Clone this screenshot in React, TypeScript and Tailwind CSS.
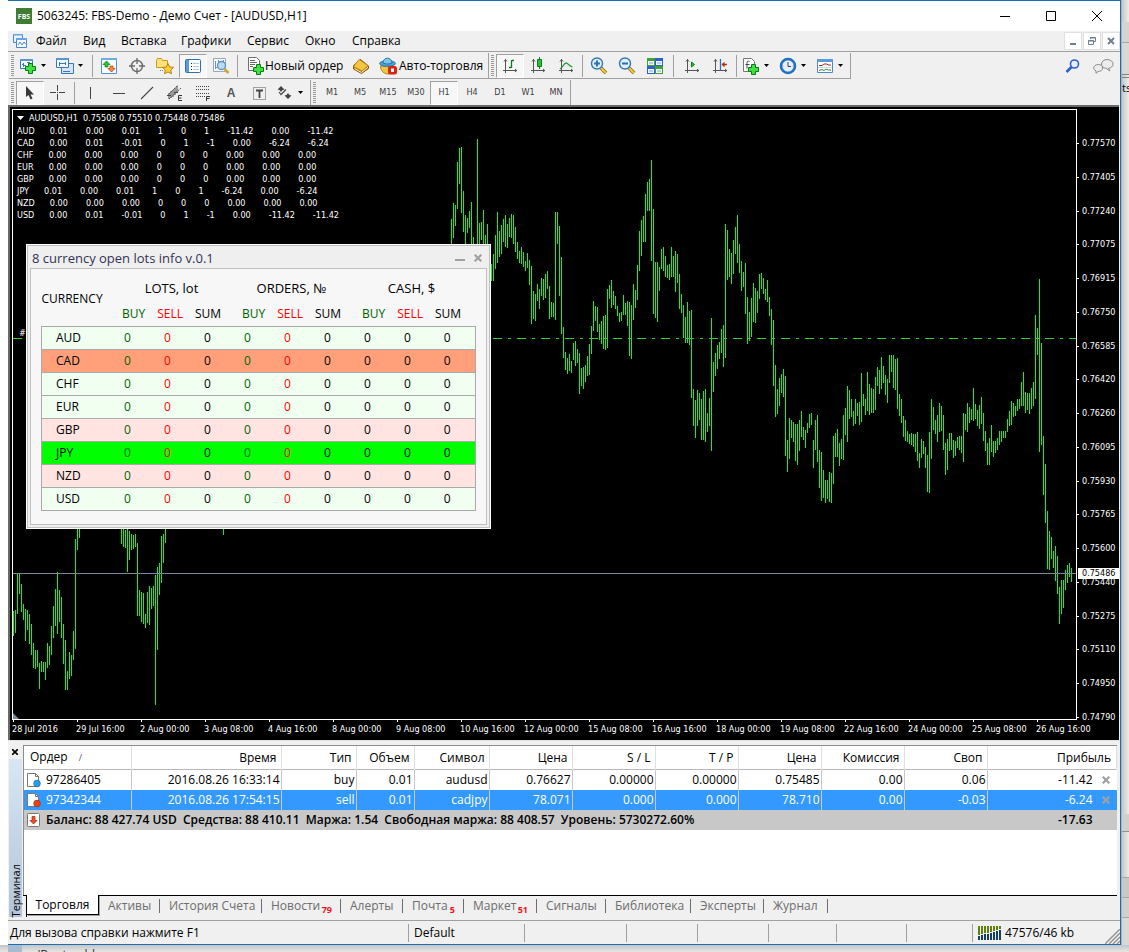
import clsx from "clsx";

type Children = React.PropsWithChildren<{ className?: string }>;

// ---------- chart data: "high-low" of each hourly bar, in plot pixels ----------

const barRuns = [
  {
    start: 0,
    bars: "501-526 500-523 463-504 464-484 474-502 494-510 499-531 500-520 504-534 514-545 533-558 540-559 540-557 553-579 551-562 552-562 552-570 533-558 536-555 516-545 496-528 479-516 462-524 480-512 487-528 514-554 530-580 561-580 542-569 545-566 521-550 429-539 410-440 410-428",
  },
  {
    start: 54,
    bars: "410-434 410-437 420-438 410-462 421-450 424-440 425-439 424-437 433-506 480-506 482-512 483-514 504-518 482-513 476-515 478-499 476-496 465-595 457-540 453-485 426-473 424-453 410-433",
  },
  { start: 105, bars: "410-425" },
  {
    start: 219,
    bars: "109-135 93-128 95-116 52-99 38-74 37-103 81-122 105-135 108-123 101-118 92-135 127-135 134-136 29-135 113-135 112-130 100-135 125-135 114-135 134-140 154-171 144-171 125-159 102-153 121-147 115-144 109-132 105-137 114-138 108-127 104-128 105-134 117-142 132-149 141-153 137-154 142-157 151-161 143-158 150-175 156-214 181-209 184-211 174-191 179-199 168-186 169-190 164-188 161-179 176-209 192-207 193-207 102-210 102-134 116-186 147-224 217-248 242-260 248-264 244-261 251-263 233-250 231-256 239-253 243-284 258-276 257-279 255-272 246-266 234-265 216-244 191-221 196-211 197-222 214-230 211-234 206-239 205-240 179-238 175-189 170-198 181-195 186-199 196-206 203-212 202-211 185-205 193-205 191-216 192-246 195-249 174-210 180-198 155-190 121-161 110-146 106-132 84-132 72-101 69-101 50-151 99-204 152-208 152-212 157-181 139-159 137-161 146-167 155-168 154-170 137-167 146-167 141-182 144-173 164-199 184-203 195-228 207-233 192-233 201-235 200-288 279-316 290-328 280-316 283-310 289-330 281-330 279-332 303-322 288-316 208-341 252-282 243-266 235-259 232-249 219-243 215-257 114-248 120-170 139-167 143-174 130-164 117-144 105-153 134-163",
  },
  {
    start: 364,
    bars: "151-181 162-177 153-204 187-234 202-231 188-227 173-212 178-213 181-203 164-189 163-179 168-184 179-190 170-192 187-206 199-235 210-276 255-307 279-304 268-296 264-283 259-287 266-346 330-362 308-349 310-328 312-332 314-351 314-355 310-341 301-327 317-330 320-338 313-323 304-318 303-315 330-358 310-340 305-352 340-378 342-391 360-388 370-393 370-389 362-392 363-393 326-374 323-347 319-347 333-356 329-349 305-350 298-325 276-332 280-309 289-307 301-316 289-314 293-306 292-315 263-312 284-296 289-305 262-301 274-305 278-303 279-303 267-300 257-276 260-284 247-279 256-273 265-285 269-293 245-273 245-262 245-278 249-280 248-299 284-306 289-313 306-327 310-331 321-332 324-334 323-335 324-337 324-342 322-351 343-358 329-348 331-344 337-358 345-382 322-383 289-349 297-320 310-324 305-332 293-322 296-321 305-340 333-365 329-360 323-341 323-340 330-348 331-346 327-338 326-340 326-343 303-352 304-320 293-322 297-313 299-310 278-311 294-309 300-316 295-319 287-314 303-331 321-341 333-355 328-355 315-342 331-347 331-343 328-340 321-335 321-332 321-328 321-328 309-322 301-316 291-315 293-307 296-306 289-301 289-299 272-296 262-296 282-303 283-300 283-304 278-299 272-296 205-289 218-245 169-342 233-335 326-385 354-413 401-459 421-460 427-449 441-458 436-471 446-484 477-514 470-504 470-498 460-480 455-473 453-467 458-472",
  },
];

const barPath = barRuns
  .flatMap(({ start, bars }) =>
    bars.split(" ").map((bar, i) => {
      const [high, low] = bar.split("-");
      return `M${(start + i) * 2 + 0.5} ${high}V${low}`;
    })
  )
  .join("");

const priceLabels = [
  "0.77570", "0.77405", "0.77240", "0.77075", "0.76915", "0.76750", "0.76585", "0.76420", "0.76260",
  "0.76095", "0.75930", "0.75765", "0.75600", "0.75440", "0.75275", "0.75110", "0.74950", "0.74790",
];

const dateLabels = [
  "28 Jul 2016", "29 Jul 16:00", "2 Aug 00:00", "3 Aug 08:00", "4 Aug 16:00", "8 Aug 00:00",
  "9 Aug 08:00", "10 Aug 16:00", "12 Aug 00:00", "15 Aug 08:00", "16 Aug 16:00", "18 Aug 00:00",
  "19 Aug 08:00", "22 Aug 16:00", "24 Aug 00:00", "25 Aug 08:00", "26 Aug 16:00",
];

const comments = [
  ["AUD", "0.01", "0.00", "0.01", "1", "0", "1", "-11.42", "0.00", "-11.42"],
  ["CAD", "0.00", "0.01", "-0.01", "0", "1", "-1", "0.00", "-6.24", "-6.24"],
  ["CHF", "0.00", "0.00", "0.00", "0", "0", "0", "0.00", "0.00", "0.00"],
  ["EUR", "0.00", "0.00", "0.00", "0", "0", "0", "0.00", "0.00", "0.00"],
  ["GBP", "0.00", "0.00", "0.00", "0", "0", "0", "0.00", "0.00", "0.00"],
  ["JPY", "0.01", "0.00", "0.01", "1", "0", "1", "-6.24", "0.00", "-6.24"],
  ["NZD", "0.00", "0.00", "0.00", "0", "0", "0", "0.00", "0.00", "0.00"],
  ["USD", "0.00", "0.01", "-0.01", "0", "1", "-1", "0.00", "-11.42", "-11.42"],
];

const lots = [
  { name: "AUD", bg: "bg-[#f0fff0]" },
  { name: "CAD", bg: "bg-[#ffa07a]" },
  { name: "CHF", bg: "bg-[#f0fff0]" },
  { name: "EUR", bg: "bg-[#f0fff0]" },
  { name: "GBP", bg: "bg-[#ffe4e1]" },
  { name: "JPY", bg: "bg-[#00ff00]" },
  { name: "NZD", bg: "bg-[#ffe4e1]" },
  { name: "USD", bg: "bg-[#f0fff0]" },
];

const lotColors = [
  "text-[#006400]", "text-[#ff0000]", "text-black",
  "text-[#006400]", "text-[#ff0000]", "text-black",
  "text-black", "text-black", "text-black",
];

const orders = [
  {
    selected: false,
    cells: ["2016.08.26 16:33:14", "buy", "0.01", "audusd", "0.76627", "0.00000", "0.00000", "0.75485", "0.00", "0.06"],
    id: "97286405",
    profit: "-11.42",
  },
  {
    selected: true,
    cells: ["2016.08.26 17:54:15", "sell", "0.01", "cadjpy", "78.071", "0.000", "0.000", "78.710", "0.00", "-0.03"],
    id: "97342344",
    profit: "-6.24",
  },
];

const orderHeads = ["Время", "Тип", "Объем", "Символ", "Цена", "S / L", "T / P", "Цена", "Комиссия", "Своп"];

const terminalTabs = [
  { label: "Активы", w: "w-[61px]" },
  { label: "История Счета", w: "w-[102px]" },
  { label: "Новости", count: 79, w: "w-[79px]" },
  { label: "Алерты", w: "w-[62px]" },
  { label: "Почта", count: 5, w: "w-[61px]" },
  { label: "Маркет", count: 51, w: "w-[73px]" },
  { label: "Сигналы", w: "w-[69px]" },
  { label: "Библиотека", w: "w-[85px]" },
  { label: "Эксперты", w: "w-[73px]" },
  { label: "Журнал", w: "w-[64px]" },
];

const menu = [
  { label: "Файл", w: "w-[47px]" },
  { label: "Вид", w: "w-[38px]" },
  { label: "Вставка", w: "w-[60px]" },
  { label: "Графики", w: "w-[66px]" },
  { label: "Сервис", w: "w-[58px]" },
  { label: "Окно", w: "w-[47px]" },
  { label: "Справка", w: "w-[60px]" },
];

const timeframes = ["M1", "M5", "M15", "M30", "H1", "H4", "D1", "W1", "MN"];

// ---------- icons ----------

function Icon({ children, size = 18 }: React.PropsWithChildren<{ size?: number }>) {
  return (
    <svg width={size} height={size} viewBox={`0 0 ${size} ${size}`} fill="none" className="shrink-0" aria-hidden>
      {children}
    </svg>
  );
}

function Plus({ x, y }: { x: number; y: number }) {
  return (
    <path
      transform={`translate(${x} ${y})`}
      d="M3.5 .5h4v3h3v4h-3v3h-4v-3h-3v-4h3z"
      fill="#3fe03f"
      stroke="#0b7a16"
    />
  );
}

const NewChartIcon = () => (
  <Icon>
    <path d="M1.500 2.500h12v9h-12z" fill="#f2f8ff" stroke="#3c78b8" />
    <path d="M1 2h13v2H1z" fill="#5a96d2" />
    <path d="M4.500 6v4M3 7.500h1M5 8.500h2M8 5.500h3" stroke="#3c78b8" />
    <Plus x={6} y={6} />
  </Icon>
);

const ProfilesIcon = () => (
  <Icon>
    <path d="M5.500 6.500h12v10h-12z" fill="#d5e6f8" stroke="#3c78b8" />
    <path d="M.500 1.500h12v9h-12z" fill="#f2f8ff" stroke="#3c78b8" />
    <path d="M0 1h13v2H0z" fill="#5a96d2" />
    <path d="M3.500 5v4M4 6.500h5M9.500 5v3M7 14.500h7" stroke="#3c78b8" />
  </Icon>
);

const MarketWatchIcon = () => (
  <Icon>
    <path d="M1.500 1.500h15v15h-15z" fill="#fafcff" stroke="#4f94d8" />
    <path d="M1 1h16v2H1z" fill="#6aaee8" />
    <path d="M6.500 4l3.500 3.500H8V10H5V7.500H3z" fill="#2fc03a" stroke="#0b7a16" strokeWidth=".7" />
    <path d="M11.500 15L8 11.500h2V9h3v2.500h2z" fill="#ff8a3a" stroke="#b83a10" strokeWidth=".7" />
  </Icon>
);

const TargetIcon = () => (
  <Icon>
    <circle cx="9" cy="9" r="5.500" stroke="#6a6a6a" strokeWidth="1.400" />
    <path d="M9 1v6M9 11v6M1 9h6M11 9h6" stroke="#6a6a6a" strokeWidth="1.300" />
  </Icon>
);

const FavoritesIcon = () => (
  <Icon>
    <path d="M.500 3.500v7h11v-7h-5l-1-2h-4z" fill="#ffe27a" stroke="#c99a1c" />
    <path d="M4 13.500h4" stroke="#777" strokeDasharray="1 1" />
    <path d="M12 6.500l1.700 3.500 3.800.400-2.800 2.600.8 3.800-3.500-1.900-3.500 1.900.8-3.800-2.800-2.600 3.800-.4z" fill="#ffcf3a" stroke="#b98212" />
  </Icon>
);

const NavigatorIcon = () => (
  <Icon>
    <rect x="1.500" y="2.500" width="15" height="13" rx="1" fill="#fff" stroke="#2f6fb4" />
    <path d="M2 3h3v12H2z" fill="#5a9be0" />
    <path d="M7 6.500h1M7 9.500h1M7 12.500h1" stroke="#222" />
    <path d="M9 6.500h6M9 9.500h6M9 12.500h6" stroke="#a9cbee" />
  </Icon>
);

const TesterIcon = () => (
  <Icon>
    <path d="M1.500 1.500h12v13h-12z" fill="#f5f9ff" stroke="#9aa9ba" />
    <path d="M3.500 4v8M6.500 3v5M11.500 3v3M4 10.500h2" stroke="#8090a4" />
    <circle cx="9.500" cy="8.500" r="4" fill="#b8dcf8" stroke="#5d8fc0" strokeWidth="1.300" />
    <path d="M12.500 12l4 4" stroke="#d9a52a" strokeWidth="2.600" />
  </Icon>
);

const NewOrderIcon = () => (
  <Icon>
    <path d="M1.500 .500h8l3 3v10h-11z" fill="#fff" stroke="#6f6f6f" />
    <path d="M3 3.500h5M3 5.500h7M3 7.500h5M3 9.500h3" stroke="#666" />
    <Plus x={6} y={7} />
  </Icon>
);

const BookIcon = () => (
  <Icon>
    <path d="M1.500 8.500l7-6 8 6.500v2.500l-7 5-8-4.500z" fill="#b97812" stroke="#8a5a0c" />
    <path d="M1.500 9.500l5.500-7 9 6-6 5.500z" fill="#f5c544" stroke="#b98212" strokeWidth=".8" />
    <path d="M2.500 11.500l7 4 6.500-5.500" stroke="#fff2c0" />
  </Icon>
);

const AutoTradeIcon = () => (
  <Icon>
    <path d="M1.500 9c0 5 3.500 8 8 8 3 0 5.500-3 6-7z" fill="#f2c640" stroke="#b98212" />
    <ellipse cx="8.500" cy="6.500" rx="8" ry="2.800" fill="#4b9fd4" stroke="#2c76a8" />
    <path d="M4 6c0-6.500 9-6.500 9 0-2.500 1.300-6.500 1.300-9 0z" fill="#7cc4ea" stroke="#2c76a8" />
    <rect x="9" y="9" width="9" height="8.500" rx="2.500" fill="#d8230f" />
    <path d="M12 11.500h3v3.500h-3z" fill="#fff" />
  </Icon>
);

const Axes = () => (
  <path d="M4.500 2v14M2 13.500h14M3 4.500l1.500-2 1.500 2M14 12l1.800 1.500-1.800 1.500" stroke="#555" />
);

const BarChartIcon = () => (
  <Icon>
    <Axes />
    <path d="M10.500 3v8M11 3.500h2M8 10.500h2" stroke="#0a7d1c" strokeWidth="1.300" />
  </Icon>
);

const CandleIcon = () => (
  <Icon>
    <Axes />
    <path d="M10.500 0v12" stroke="#0a7d1c" />
    <path d="M8.500 2.500h4v7h-4z" fill="#2fc03a" stroke="#0a7d1c" />
  </Icon>
);

const LineChartIcon = () => (
  <Icon>
    <Axes />
    <path d="M3 12c3-1.500 4-6 6-6s3 3 6.500 4" stroke="#2f9a3c" strokeWidth="1.300" />
  </Icon>
);

function ZoomIcon({ plus = false }: { plus?: boolean }) {
  return (
    <Icon>
      <path d="M11 11l5 5" stroke="#8a6410" strokeWidth="3.600" />
      <path d="M11 11l5 5" stroke="#f2c640" strokeWidth="2.200" />
      <circle cx="7" cy="6.500" r="5.500" fill="#dff0fd" stroke="#3578b8" strokeWidth="1.400" />
      <path d={plus ? "M7 3.500v6M4 6.500h6" : "M4 6.500h6"} stroke="#2f6fb4" strokeWidth="2" />
    </Icon>
  );
}

const TileIcon = () => (
  <Icon>
    <path d="M1 1h8v8H1zM9 9h8v8H9z" fill="#3fa52f" />
    <path d="M9 1h8v8H9zM1 9h8v8H1z" fill="#2f5fd0" />
    <path d="M2 4h6v4H2zM10 4h6v4h-6zM2 12h6v4H2zM10 12h6v4h-6z" fill="#f2f7ff" />
    <path d="M3 6h4M11 6h4M3 14h4M11 14h4" stroke="#7ea6d8" />
  </Icon>
);

const ScrollIcon = () => (
  <Icon>
    <Axes />
    <path d="M8.500 5v5l3-2.500z" fill="#2fc03a" stroke="#0a7d1c" />
  </Icon>
);

const ShiftIcon = () => (
  <Icon>
    <Axes />
    <path d="M9.500 2v11" stroke="#2f6fb4" strokeWidth="1.300" />
    <path d="M11 7.500h5M13.500 5.500l-2 2 2 2" stroke="#b03010" strokeWidth="1.300" />
  </Icon>
);

const IndicatorIcon = () => (
  <Icon>
    <path d="M1.500 1.500h8l3 3v10h-11z" fill="#fff" stroke="#777" />
    <path d="M7.500 4.500c-2-1-2.500 0-2.500 2v5M3.500 7.500h4" stroke="#444" />
    <Plus x={6} y={7} />
  </Icon>
);

const ClockIcon = () => (
  <Icon>
    <circle cx="9" cy="9" r="7" fill="#e3f1fd" stroke="#1f6fc4" strokeWidth="2.600" />
    <path d="M9 5v4.500h3" stroke="#444" />
    <path d="M9 3v1M9 14v1M3.500 9h1M13.500 9h1" stroke="#999" />
  </Icon>
);

const TemplateIcon = () => (
  <Icon>
    <path d="M1.500 2.500h15v13h-15z" fill="#fff" stroke="#4a88c8" />
    <path d="M1 2h16v3H1z" fill="#5a9be0" />
    <path d="M3 8.500h3l2-1.500h3l1 1h3" stroke="#a03020" />
    <path d="M2 10.500h14" stroke="#c9d8e8" />
    <path d="M3 13.500l3-1 2 1 2-1.500 2 1h3" stroke="#2f8a3c" />
  </Icon>
);

const CursorIcon = () => (
  <Icon>
    <path d="M5 2v11l2.500-2 2 4.500 2-1-2-4h3.500z" fill="#3a3a3a" />
  </Icon>
);

const CrossIcon = () => (
  <Icon>
    <path d="M8.500 1v6M8.500 10v6M1 8.500h6M10 8.500h6M8 8.500h1" stroke="#444" />
  </Icon>
);

const VLineIcon = () => (
  <Icon>
    <path d="M8.500 3v12" stroke="#444" />
  </Icon>
);

const HLineIcon = () => (
  <Icon>
    <path d="M3 9.500h12" stroke="#444" />
  </Icon>
);

const TrendIcon = () => (
  <Icon>
    <path d="M3 15L15 3" stroke="#444" strokeWidth="1.100" />
  </Icon>
);

const ChannelIcon = () => (
  <Icon>
    <path d="M1 12L12 1M3 15L15 4" stroke="#444" strokeDasharray="2 1" />
    <path d="M5 7v7M7 6v7M9 4v7M11 2v7M3 9v6M2 11.500h3M8 8.500h4" stroke="#444" />
    <path d="M16 11.500h-3.500v5H16M13 14h2.500" stroke="#333" />
  </Icon>
);

const FiboIcon = () => (
  <Icon>
    <path d="M2 2.500h13M2 5.500h13M2 9.500h13M2 12.500h9" stroke="#444" strokeDasharray="1 1" />
    <path d="M16 12.500h-3.500V17M13 14.500h2.500" stroke="#333" />
  </Icon>
);

const LabelIcon = () => (
  <Icon>
    <path d="M3.500 3.500h12v12h-12z" stroke="#555" strokeDasharray="1 1" />
    <path d="M6 6.500h7M9.500 6v8" stroke="#444" strokeWidth="1.800" />
  </Icon>
);

const ArrowsIcon = () => (
  <Icon>
    <path d="M5 2l3.500 3.500-2 .500-1.500 2-1.500-2-2-.5z" fill="#444" />
    <path d="M3 8l2 2.500 5-5" stroke="#444" strokeWidth="1.200" />
    <path d="M12 15l3.500-3.500-2-.5-1.500-2-1.500 2-2 .5z" fill="#444" />
  </Icon>
);

const Caret = () => (
  <svg width="5" height="3" viewBox="0 0 5 3" className="shrink-0" aria-hidden>
    <path d="M0 0h5L2.500 3z" fill="#000" />
  </svg>
);

const CloseGlyph = ({ color }: { color: string }) => (
  <svg width="8" height="8" viewBox="0 0 8 8" className="shrink-0" aria-hidden>
    <path d="M.700 .700l6.600 6.600M7.300 .700L.700 7.300" stroke={color} strokeWidth="2.200" />
  </svg>
);

const OrderIcon = ({ color }: { color: string }) => (
  <Icon size={16}>
    <path d="M1.500 1.500h8l3 3v10h-11z" fill="#fff" stroke="#777" />
    <path d="M9.500 1.500v3h3" stroke="#777" />
    <circle cx="11" cy="11.500" r="3.400" fill={color} stroke="#333" strokeOpacity=".5" strokeWidth=".8" />
  </Icon>
);

// ---------- toolbars ----------

function Grip() {
  return (
    <div className="mx-[2px] h-[22px] w-[3px] bg-[repeating-linear-gradient(to_bottom,#9a9a9a_0_1px,#f0f0f0_1px_2px)]" />
  );
}

function Sep({ className = "h-[22px] bg-[#a0a0a0]" }: { className?: string }) {
  return <div className={clsx("w-px", className)} />;
}

function Tool({ title, pressed, children }: React.PropsWithChildren<{ title: string; pressed?: boolean }>) {
  return (
    <button
      title={title}
      aria-pressed={pressed}
      className={clsx(
        "flex h-6 w-7 items-center justify-center",
        pressed && "border border-[#a0a0a0] border-r-white border-b-white bg-[#f7f7f7]"
      )}
    >
      {children}
    </button>
  );
}

function DropTool({ title, children }: React.PropsWithChildren<{ title: string }>) {
  return (
    <button title={title} className="flex h-6 w-[37px] items-center gap-1 pl-[3px]">
      {children}
      <Caret />
    </button>
  );
}

function Bar({ children }: Children) {
  return <div className="flex items-center border-r border-[#a0a0a0]">{children}</div>;
}

function TitleBar() {
  return (
    <header className="flex h-[30px] items-center bg-white pl-2">
      <div className="flex h-4 w-4 items-center justify-center bg-[#3f7d35] text-[7px] leading-none font-bold text-white">
        FBS
      </div>
      <h1 className="flex-1 pl-[5px] text-[12px] text-black">5063245: FBS-Demo - Демо Счет - [AUDUSD,H1]</h1>
      <button title="Свернуть" className="flex h-full w-[46px] items-center justify-center">
        <svg width="10" height="10"><path d="M0 5.500h10" stroke="#000" /></svg>
      </button>
      <button title="Развернуть" className="flex h-full w-[46px] items-center justify-center">
        <svg width="10" height="10"><path d="M.5.500h9v9h-9z" fill="none" stroke="#000" /></svg>
      </button>
      <button title="Закрыть" className="flex h-full w-[46px] items-center justify-center">
        <svg width="10" height="10"><path d="M0 0l10 10M10 0L0 10" stroke="#000" /></svg>
      </button>
    </header>
  );
}

function MdiButton({ title, children }: React.PropsWithChildren<{ title: string }>) {
  return (
    <button title={title} className="flex h-[18px] w-[18px] items-center justify-center border border-[#e0e0e0] bg-white">
      <svg width="10" height="10" fill="none" stroke="#6f7f8f" aria-hidden>{children}</svg>
    </button>
  );
}

function MenuBar() {
  return (
    <nav className="flex h-[21px] items-center border-b border-[#a0a0a0] pl-1">
      <Icon size={16}>
        <path d="M1.500 1.500h9v8h-9z" fill="#e8f2fd" stroke="#4a88d0" />
        <path d="M4.500 5.500h10v9h-10z" fill="#f5faff" stroke="#4a88d0" />
        <path d="M4 5h11v2H4zM1 1h10v1.500H1z" fill="#6aa4e4" />
        <path d="M6 12l2-3 2 3 2-3 1.500 2" stroke="#4a88d0" />
      </Icon>
      <ul className="flex flex-1 pl-2 text-[12px] leading-[20px]">
        {menu.map(({ label, w }) => (
          <li key={label} className={w}>
            <button className="whitespace-nowrap">{label}</button>
          </li>
        ))}
      </ul>
      <div className="flex gap-px">
        <MdiButton title="Свернуть окно">
          <path d="M2 8h6" strokeWidth="2" />
        </MdiButton>
        <MdiButton title="Восстановить окно">
          <path d="M3.500 3V1.500h5v4H7M1.500 4.500h5v4h-5zM3 2h6M1 5h6" />
        </MdiButton>
        <MdiButton title="Закрыть окно">
          <path d="M2 2l6 6M8 2L2 8" strokeWidth="2" />
        </MdiButton>
      </div>
    </nav>
  );
}

function MainToolbar() {
  return (
    <div className="flex items-stretch pt-px pr-[6px] pl-px">
      <div className="flex h-[26px] border-b border-[#a0a0a0]">
        <Bar>
          <Grip />
          <DropTool title="Новый график"><NewChartIcon /></DropTool>
          <DropTool title="Профили"><ProfilesIcon /></DropTool>
          <div className="px-[2px]"><Sep /></div>
          <Tool title="Обзор рынка"><MarketWatchIcon /></Tool>
          <Tool title="Окно данных"><TargetIcon /></Tool>
          <Tool title="Избранное"><FavoritesIcon /></Tool>
          <Tool title="Терминал" pressed><NavigatorIcon /></Tool>
          <Tool title="Тестер стратегий"><TesterIcon /></Tool>
          <div className="pl-[2px]"><Sep /></div>
          <button className="flex h-6 w-[109px] items-center pl-[9px] text-[12px] whitespace-nowrap">
            <NewOrderIcon />
            Новый ордер
          </button>
          <Tool title="MetaEditor"><BookIcon /></Tool>
          <button className="flex h-6 w-[113px] items-center gap-[2px] pl-1 text-[12px] whitespace-nowrap">
            <AutoTradeIcon />
            Авто-торговля
          </button>
        </Bar>
        <Bar>
          <Grip />
          <Tool title="Бары" pressed><BarChartIcon /></Tool>
          <Tool title="Японские свечи"><CandleIcon /></Tool>
          <Tool title="Линия"><LineChartIcon /></Tool>
          <div className="px-[2px]"><Sep /></div>
          <Tool title="Увеличить"><ZoomIcon plus /></Tool>
          <Tool title="Уменьшить"><ZoomIcon /></Tool>
          <Tool title="Окна мозаикой"><TileIcon /></Tool>
          <div className="px-1"><Sep /></div>
          <Tool title="Автопрокрутка"><ScrollIcon /></Tool>
          <Tool title="Сдвиг графика"><ShiftIcon /></Tool>
          <div className="px-[2px]"><Sep /></div>
          <DropTool title="Индикаторы"><IndicatorIcon /></DropTool>
          <DropTool title="Периоды"><ClockIcon /></DropTool>
          <DropTool title="Шаблоны"><TemplateIcon /></DropTool>
        </Bar>
      </div>
      <div className="flex flex-1 items-center justify-end gap-3">
        <button title="Поиск">
          <Icon size={16}>
            <circle cx="9.500" cy="6" r="4" fill="#e8f0ff" stroke="#2f5fd0" strokeWidth="1.600" />
            <path d="M6.500 9L1.500 14" stroke="#2f5fd0" strokeWidth="2.600" />
          </Icon>
        </button>
        <button title="Чат">
          <svg width="21" height="16" fill="#ececec" stroke="#8c8c8c" aria-hidden>
            <path d="M20 6c0 2.500-2 4-4.500 4.300L17 13l-4-2.700C10.500 10 8.500 8.500 8.500 6s2.500-4.500 5.700-4.500S20 3.500 20 6z" />
            <path d="M.7 10c0-2 2-3.500 4.500-3.500s4.500 1.500 4.500 3.500-2 3.500-4.500 3.500L3 15.300v-2.500C1.500 12.200.7 11.200.7 10z" />
          </svg>
        </button>
      </div>
    </div>
  );
}

function DrawToolbar() {
  return (
    <div className="flex h-[26px] pt-px pl-px">
      <Bar>
        <Grip />
        <Tool title="Курсор" pressed><CursorIcon /></Tool>
        <Tool title="Перекрестие"><CrossIcon /></Tool>
        <div className="px-[2px]"><Sep /></div>
        <Tool title="Вертикальная линия"><VLineIcon /></Tool>
        <Tool title="Горизонтальная линия"><HLineIcon /></Tool>
        <Tool title="Трендовая линия"><TrendIcon /></Tool>
        <Tool title="Канал"><ChannelIcon /></Tool>
        <Tool title="Уровни Фибоначчи"><FiboIcon /></Tool>
        <Tool title="Текст">
          <span className="font-['Liberation_Sans'] text-[12px] font-bold text-[#555]">A</span>
        </Tool>
        <Tool title="Метка"><LabelIcon /></Tool>
        <DropTool title="Стрелки"><ArrowsIcon /></DropTool>
      </Bar>
      <Bar>
        <Grip />
        {timeframes.map((tf) => (
          <Tool key={tf} title={tf} pressed={tf === "H1"}>
            <span className="font-['DejaVu_Sans_Condensed','DejaVu_Sans'] text-[9px] text-[#404040]">{tf}</span>
          </Tool>
        ))}
      </Bar>
    </div>
  );
}

// ---------- chart ----------

function SubHeads({ title, className }: { title: string; className?: string }) {
  return (
    <th colSpan={3} className={clsx("py-0 pr-0 font-normal", className)}>
      <div className="text-[13px] leading-[25px]">{title}</div>
      <div className="flex justify-center gap-3 leading-[25px]">
        <span className="text-[#006400]">BUY</span>
        <span className="text-[#ff0000]">SELL</span>
        <span>SUM</span>
      </div>
    </th>
  );
}

function LotsPanel() {
  return (
    <section className="absolute top-[137px] left-4 border border-white bg-[#c0c0c0] p-px font-['Open_Sans'] text-[12px] text-black">
      <div className="bg-[#efefef] p-[2px]">
        <div className="flex h-[20px] items-center pr-[5px] pl-[2px] text-[#333355]">
          <h2 className="flex-1 text-[13px] leading-[18px]">8 currency open lots info v.0.1</h2>
          <button title="Свернуть" className="mt-[3px] mr-[9px] h-[2px] w-[10px] bg-[#a0a0a0]" />
          <button title="Закрыть"><CloseGlyph color="#a0a0a0" /></button>
        </div>
        <div className="border border-[#c0c0c0] bg-[#f7f7f7] px-[10px] pt-[7px] pb-[13px]">
          <table className="table-fixed border-collapse">
            <colgroup>
              <col className="w-[66px]" />
              {lotColors.map((_, i) => (
                <col key={i} className={i === 8 ? "w-[48px]" : "w-[40px]"} />
              ))}
            </colgroup>
            <thead>
              <tr>
                <th className="p-0 pb-1 text-left font-normal">CURRENCY</th>
                <SubHeads title="LOTS, lot" className="pl-2" />
                <SubHeads title="ORDERS, №" className="pl-2" />
                <SubHeads title="CASH, $" className="pl-0" />
              </tr>
            </thead>
            <tbody className="border border-[#a9a9a9]">
              {lots.map(({ name, bg }) => (
                <tr key={name} className={clsx("h-[23px] border border-[#a9a9a9]", bg)}>
                  <th scope="row" className="py-0 pl-[14px] text-left leading-[22px] font-normal">{name}</th>
                  {lotColors.map((color, i) => (
                    <td key={i} className={clsx("py-0 text-center", color, i === 8 ? "pr-2" : "")}>
                      0
                    </td>
                  ))}
                </tr>
              ))}
            </tbody>
          </table>
        </div>
      </div>
    </section>
  );
}

function Chart() {
  return (
    <main className="relative flex flex-1 flex-col border-t-2 border-l-2 border-[#696969] bg-black pt-[2px] pl-[2px] font-['DejaVu_Sans_Condensed','DejaVu_Sans'] text-[9px] text-white">
      <div className="flex flex-1">
        <div className="relative flex-1 overflow-hidden border border-white">
          <svg className="absolute inset-0 h-full w-full" aria-label="AUDUSD,H1">
            <path d={barPath} stroke="#00ff00" />
            <path d="M0 228.500H1063" stroke="#32cd32" strokeDasharray="9 6 3 6" />
            <path d="M0 463.500H1063" stroke="#778899" />
            <svg y="100%" overflow="visible"><path d="M0 0V-6L6 0z" fill="#778899" /></svg>
            <text x="6" y="226" fill="#fff">#</text>
          </svg>
          <div className="relative pl-1 leading-3">
            <div className="flex h-[15px] items-center gap-[5px]">
              <svg width="7" height="4"><path d="M0 0h7L3.500 4z" fill="#fff" /></svg>
              <span className="whitespace-pre">AUDUSD,H1  0.75508 0.75510 0.75448 0.75486</span>
            </div>
            {comments.map(([name, ...values]) => (
              <div key={name} className="flex gap-[15px]">
                <span>{name}</span>
                <span className="flex gap-[18px]">
                  {values.map((v, i) => (
                    <span key={i}>{v}</span>
                  ))}
                </span>
              </div>
            ))}
          </div>
        </div>
        <div className="relative w-[42px] pt-[29px] leading-[11px]">
          <div className="-mb-[3px] flex h-[calc(100%+3px)] flex-col justify-between">
            {priceLabels.map((p) => (
              <div key={p} className="flex items-center gap-[3px]">
                <span className="h-px w-[2px] bg-white" />
                {p}
              </div>
            ))}
          </div>
          <div className="absolute top-[459px] right-0 left-px bg-white pl-1 text-black">0.75486</div>
        </div>
      </div>
      <div className="flex h-[20px] overflow-hidden leading-3 whitespace-nowrap">
        {dateLabels.map((d) => (
          <div key={d} className="w-16 shrink-0">
            <div className="ml-px h-[2px] w-px bg-white" />
            <div className="pt-px">{d}</div>
          </div>
        ))}
      </div>
      <LotsPanel />
    </main>
  );
}

// ---------- terminal ----------

function Terminal() {
  return (
    <section className="flex border-t border-[#e3e3e3] pt-1 text-[12px]">
      <div className="flex w-[14px] flex-col items-center">
        <button title="Закрыть терминал" className="flex h-[14px] w-full items-center justify-center">
          <svg width="6" height="6" aria-hidden><path d="M0 0l6 6M6 0L0 6" stroke="#000" strokeWidth="1.600" /></svg>
        </button>
        <div className="flex w-[13px] flex-1 items-end bg-linear-to-b from-[#d8e6f4] to-[#b4c4d8]">
          <span className="w-full rotate-180 text-[11px] leading-[13px] [writing-mode:vertical-rl]">Терминал</span>
        </div>
      </div>
      <div className="ml-px min-w-0 flex-1 pr-[3px]">
        <div className="h-[150px] border-t border-l border-[#8c8c8c] bg-white">
          <table className="w-full table-fixed border-collapse">
            <colgroup>
              <col className="w-[107px]" />
              <col className="w-[150px]" />
              <col className="w-[75px]" />
              <col className="w-[58px]" />
              <col className="w-[75px]" />
              <col className="w-[83px]" />
              <col className="w-[83px]" />
              <col className="w-[83px]" />
              <col className="w-[83px]" />
              <col className="w-[83px]" />
              <col className="w-[83px]" />
              <col />
            </colgroup>
            <thead>
              <tr className="h-[23px] border-b border-[#b8b8b8]">
                <th className="border-r border-[#e0e0e0] py-0 pl-[6px] text-left leading-[22px] font-normal">
                  Ордер <span className="pl-2 text-[9px] text-[#555]">/</span>
                </th>
                {orderHeads.map((h, i) => (
                  <th key={i} className="border-r border-[#e0e0e0] py-0 pr-1 text-right leading-[22px] font-normal">{h}</th>
                ))}
                <th className="border-r border-[#e0e0e0] py-0 pr-[5px] text-right leading-[22px] font-normal">Прибыль</th>
              </tr>
            </thead>
            <tbody>
              {orders.map(({ id, selected, cells, profit }) => (
                <tr key={id} className={clsx("h-5", selected ? "bg-[#3399ff] text-white" : "text-black")}>
                  <td className="border-r border-[#c8c8c8] p-0">
                    <div className="flex items-center gap-1 pl-[2px] leading-5">
                      <OrderIcon color={selected ? "#f04010" : "#1fa0f0"} />
                      {id}
                    </div>
                  </td>
                  {cells.map((c, i) => (
                    <td key={i} className="border-r border-[#c8c8c8] py-0 pr-px text-right leading-5">{c}</td>
                  ))}
                  <td className="p-0">
                    <div className="flex items-center justify-end gap-[9px] pr-[7px] leading-5">
                      {profit}
                      <button title="Закрыть ордер"><CloseGlyph color="#a0a0a0" /></button>
                    </div>
                  </td>
                </tr>
              ))}
              <tr className="h-5 bg-[#c8c8c8] font-semibold text-black">
                <td colSpan={11} className="p-0">
                  <div className="flex items-center gap-1 pl-[2px] leading-5 whitespace-nowrap">
                    <Icon size={16}>
                      <rect x="1.500" y="1.500" width="12" height="13" rx="1" fill="#fff" stroke="#777" />
                      <path d="M7.500 12L4 8.500h2v-4h3v4h2z" fill="#f05020" stroke="#a02808" strokeWidth=".7" />
                    </Icon>
                    <span className="whitespace-pre">
                      Баланс: 88 427.74 USD  Средства: 88 410.11  Маржа: 1.54  Свободная маржа: 88 408.57  Уровень: 5730272.60%
                    </span>
                  </div>
                </td>
                <td className="py-0 pr-[24px] text-right">-17.63</td>
              </tr>
            </tbody>
          </table>
        </div>
        <div className="flex h-[22px]">
          <div className="w-1 border-t border-r border-black" />
          <button className="h-[20px] w-[72px] border-r border-b border-black bg-white leading-[18px] shadow-[1px_1px_0_#a0a0a0]">
            Торговля
          </button>
          <div className="flex flex-1 border-t border-black text-[#6d6d6d]">
            {terminalTabs.map(({ label, count, w }) => (
              <button key={label} className={clsx("flex h-[19px] shrink-0 items-center pl-[9px] whitespace-nowrap", w)}>
                <span className="flex-1 text-left leading-[18px]">{label}</span>
                {count && (
                  <span className="pt-[8px] pr-[8px] text-[9px] leading-[9px] font-bold text-[#f01020]">{count}</span>
                )}
                <Sep className="h-[14px] bg-[#6d6d6d]" />
              </button>
            ))}
          </div>
        </div>
      </div>
    </section>
  );
}

function StatusBar() {
  return (
    <footer className="mt-[3px] flex h-6 items-center border-t border-[#a0a0a0] pt-px text-[12px]">
      <div className="flex-1 pl-[2px]">Для вызова справки нажмите F1</div>
      <Sep className="h-[18px] bg-[#a0a0a0]" />
      <div className="w-[115px] pl-[5px]">Default</div>
      <Sep className="h-[18px] bg-[#a0a0a0]" />
      <div className="w-[101px]" />
      <Sep className="h-[18px] bg-[#a0a0a0]" />
      <div className="w-[70px]" />
      <Sep className="h-[18px] bg-[#a0a0a0]" />
      <div className="w-[70px]" />
      <Sep className="h-[18px] bg-[#a0a0a0]" />
      <div className="w-[67px]" />
      <Sep className="h-[18px] bg-[#a0a0a0]" />
      <div className="w-[69px]" />
      <Sep className="h-[18px] bg-[#a0a0a0]" />
      <div className="w-[65px]" />
      <Sep className="h-[18px] bg-[#a0a0a0]" />
      <div className="flex w-[147px] items-center gap-1 self-stretch pl-[5px]">
        <svg width="23" height="14" aria-hidden>
          {[9, 8, 7, 7, 6, 5, 4, 3].map((h, i) => (
            <g key={i}>
              <path d={`M${i * 3} 0h2v${h}h-2z`} fill="#5f7f10" />
              <path d={`M${i * 3} ${h + 1}h2V14h-2z`} fill="#12405e" />
            </g>
          ))}
        </svg>
        <span className="flex-1">47576/46 kb</span>
        <svg width="15" height="15" className="self-end" aria-hidden>
          <path d="M0 15L15 0M4 15L15 4M8 15L15 8M12 15L15 12" stroke="#909090" strokeWidth="1.400" />
        </svg>
      </div>
    </footer>
  );
}

// slivers of the windows that lie behind this one
function BehindRight() {
  return (
    <div className="flex w-2 flex-col overflow-hidden border-l border-[#b0b0b0] bg-linear-to-r from-[#c8c8c8] to-[#ececec] text-[11px] leading-5">
      <div className="h-[22px]" />
      <div className="h-[21px] border-b border-[#a8a8a8] bg-[#d4d4d4]" />
      <div className="h-[32px] border-b border-[#808080] bg-[#d8d8d8]" />
      <div className="mt-[2px] border-t border-[#808080]">ts</div>
      <div className="flex-1" />
      <div className="h-[18px] border-b border-[#909090] bg-[#d0d0d0]" />
      <div className="h-[46px] border-b border-[#a8a8a8]" />
      <div className="h-[20px] border-b border-[#a8a8a8] bg-[#c8c8c8]" />
      <div className="h-[20px] border-b border-[#a8a8a8] bg-[#d0d0d0]" />
      <div className="h-[27px] bg-[#d8d8d8]" />
    </div>
  );
}

function BehindBottom() {
  return (
    <div className="flex h-[7px] overflow-hidden bg-linear-to-b from-[#c4c4c4] to-[#e6e6e6] pl-2 text-[12px] leading-5">
      <div className="w-[14px] bg-[#a8bcd0]" />
      <div className="ml-2 text-[#333]">• 'Bootup hl</div>
    </div>
  );
}

export default function App() {
  return (
    <div className="flex min-h-screen flex-col bg-white font-['Open_Sans','Noto_Sans',sans-serif] text-black">
      <div className="flex flex-1">
        <div className="w-2" />
        <div className="flex min-w-0 flex-1 flex-col border-t border-r border-b border-[#1a6fb4] bg-[#f0f0f0]">
          <TitleBar />
          <MenuBar />
          <MainToolbar />
          <DrawToolbar />
          <div className="flex flex-1 pr-px">
            <Chart />
          </div>
          <Terminal />
          <StatusBar />
        </div>
        <BehindRight />
      </div>
      <BehindBottom />
    </div>
  );
}
